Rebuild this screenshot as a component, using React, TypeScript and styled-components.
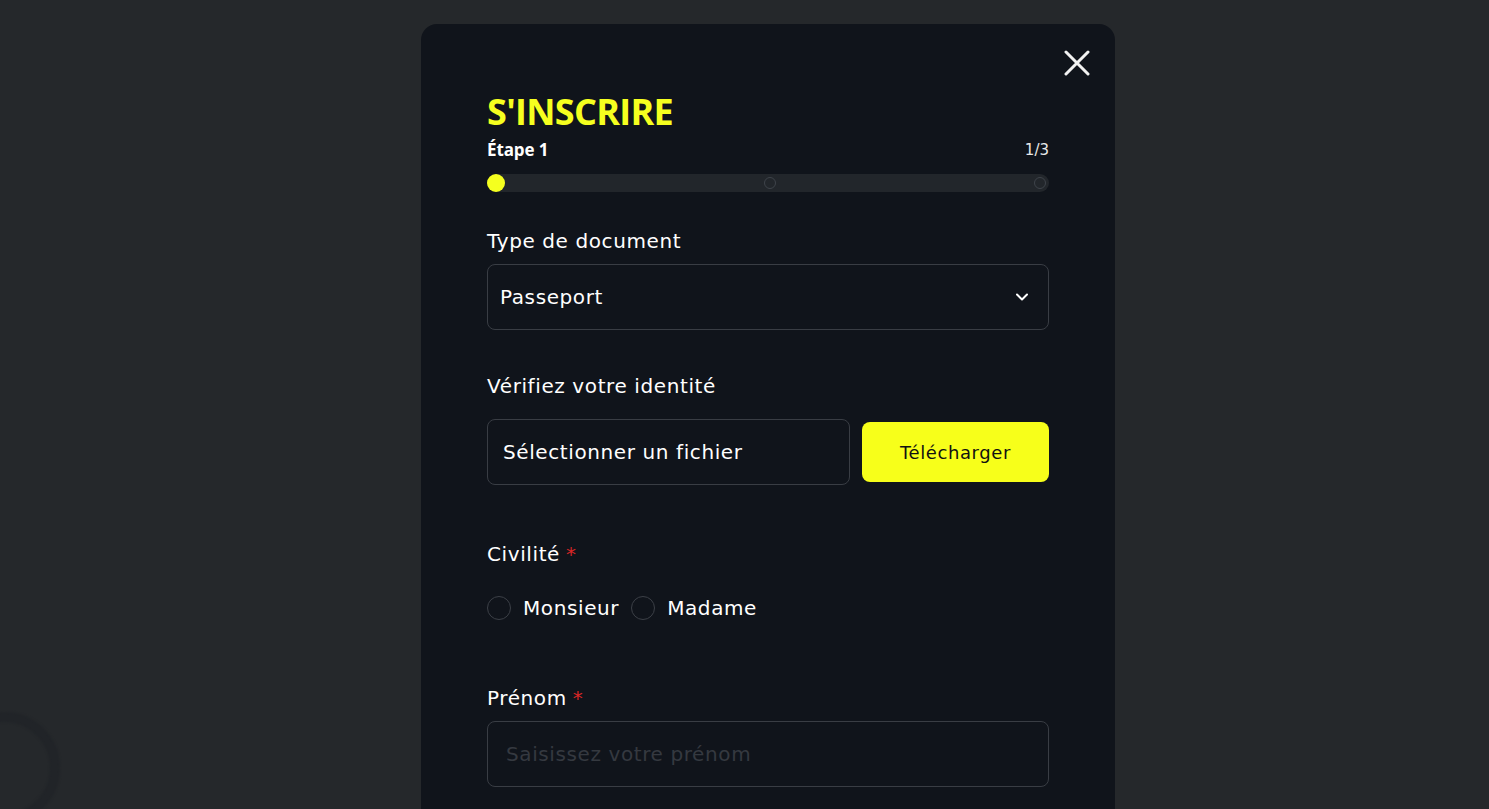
import React from 'react';
import styled, { createGlobalStyle } from 'styled-components';

const GlobalStyle = createGlobalStyle`
    html, body {
        margin: 0;
        padding: 0;
        height: 100%;
        overflow: hidden;
        background: #25282b;
        font-family: 'DejaVu Sans', 'Open Sans', sans-serif;
        color: #ffffff;
    }
`;

const Page = styled.div`
    min-height: 100vh;
    display: flex;
    justify-content: center;
    padding: 24px 0 0 47px;
    box-sizing: border-box;
`;

const Spinner = styled.div`
    position: fixed;
    left: -52px;
    top: 712px;
    width: 92px;
    height: 92px;
    border-radius: 50%;
    border: 10px solid #212428;
    filter: blur(1px);
`;

const Modal = styled.div`
    position: relative;
    width: 694px;
    min-height: 820px;
    box-sizing: border-box;
    padding: 68px 66px 40px;
    background: #10141b;
    border-radius: 16px;
`;

const CloseButton = styled.button`
    position: absolute;
    top: 23px;
    right: 22px;
    width: 32px;
    height: 32px;
    padding: 0;
    border: none;
    background: none;
    cursor: pointer;
    display: flex;
    align-items: center;
    justify-content: center;
`;

const Title = styled.h1`
    margin: 0;
    font-family: 'Open Sans', sans-serif;
    font-size: 36px;
    line-height: 40px;
    font-weight: 700;
    letter-spacing: -0.7px;
    color: #f5ff1f;
`;

const StepRow = styled.div`
    display: flex;
    justify-content: space-between;
    align-items: center;
    margin-top: 7px;
    font-size: 15px;
    line-height: 22px;
`;

const StepName = styled.span`
    font-family: 'Open Sans', sans-serif;
    font-weight: 700;
    font-size: 17px;
    letter-spacing: -0.1px;
`;

const StepCount = styled.span`
    font-weight: 400;
    color: #e8e8e8;
`;

const Track = styled.div`
    margin-top: 13px;
    height: 18px;
    border-radius: 9px;
    background: #22262b;
    display: flex;
    justify-content: space-between;
    align-items: center;
    padding: 0 3px 0 0;
`;

const Dot = styled.span<{ active?: boolean }>`
    box-sizing: border-box;
    width: ${p => (p.active ? '18px' : '12px')};
    height: ${p => (p.active ? '18px' : '12px')};
    border-radius: 50%;
    background: ${p => (p.active ? '#f5ff1f' : 'transparent')};
    border: ${p => (p.active ? 'none' : '1.5px solid #3e434a')};
`;

const Field = styled.div<{ gap?: number }>`
    margin-top: ${p => p.gap ?? 40}px;
`;

const Label = styled.div`
    font-size: 20px;
    line-height: 26px;
    font-weight: 400;
    letter-spacing: 0.6px;
    margin-bottom: 10px;
`;

const Required = styled.span`
    color: #d92626;
    margin-left: 6px;
`;

const Box = styled.div`
    box-sizing: border-box;
    height: 66px;
    border: 1px solid #393d44;
    border-radius: 8px;
    display: flex;
    align-items: center;
    justify-content: space-between;
    padding: 0 18px 0 12px;
    font-size: 20px;
    letter-spacing: 0.6px;
`;

const FileRow = styled.div`
    display: flex;
    align-items: center;
    gap: 12px;
    margin-top: 20px;
`;

const FileBox = styled(Box)`
    flex: 1;
    padding-left: 15px;
`;

const UploadButton = styled.button`
    width: 187px;
    height: 60px;
    border: none;
    border-radius: 8px;
    background: #f7ff1a;
    color: #111;
    font-family: inherit;
    font-size: 18px;
    letter-spacing: 0.6px;
    cursor: pointer;
`;

const RadioRow = styled.div`
    display: flex;
    align-items: center;
    gap: 12px;
    margin-top: 29px;
`;

const RadioOption = styled.label`
    display: flex;
    align-items: center;
    gap: 12px;
    font-size: 20px;
    letter-spacing: 0.6px;
`;

const RadioCircle = styled.span`
    box-sizing: border-box;
    width: 24px;
    height: 24px;
    border-radius: 50%;
    border: 1px solid #3c4047;
`;

const TextInput = styled.input`
    box-sizing: border-box;
    width: 100%;
    height: 66px;
    border: 1px solid #393d44;
    border-radius: 8px;
    background: transparent;
    padding: 0 18px;
    font-family: inherit;
    font-size: 20px;
    letter-spacing: 0.6px;
    color: #fff;
    outline: none;
    &::placeholder {
        color: #353940;
    }
`;

const App = () => {
    return (
        <>
            <GlobalStyle />
            <Spinner />
            <Page>
                <Modal>
                    <CloseButton aria-label="Fermer">
                        <svg width="26" height="26" viewBox="0 0 26 26" fill="none">
                            <path d="M2 2L24 24M24 2L2 24" stroke="#f2f2f2" strokeWidth="3" strokeLinecap="round" />
                        </svg>
                    </CloseButton>

                    <Title>S'INSCRIRE</Title>
                    <StepRow>
                        <StepName>Étape 1</StepName>
                        <StepCount>1/3</StepCount>
                    </StepRow>
                    <Track>
                        <Dot active />
                        <Dot />
                        <Dot />
                    </Track>

                    <Field gap={36}>
                        <Label>Type de document</Label>
                        <Box>
                            <span>Passeport</span>
                            <svg width="16" height="16" viewBox="0 0 16 16" fill="none">
                                <path d="M3 5.5L8 10.5L13 5.5" stroke="#fff" strokeWidth="2" strokeLinecap="round" strokeLinejoin="round" />
                            </svg>
                        </Box>
                    </Field>

                    <Field gap={43}>
                        <Label>Vérifiez votre identité</Label>
                        <FileRow>
                            <FileBox>Sélectionner un fichier</FileBox>
                            <UploadButton>Télécharger</UploadButton>
                        </FileRow>
                    </Field>

                    <Field gap={56}>
                        <Label>
                            Civilité<Required>*</Required>
                        </Label>
                        <RadioRow>
                            <RadioOption>
                                <RadioCircle />
                                Monsieur
                            </RadioOption>
                            <RadioOption>
                                <RadioCircle />
                                Madame
                            </RadioOption>
                        </RadioRow>
                    </Field>

                    <Field gap={65}>
                        <Label>
                            Prénom<Required>*</Required>
                        </Label>
                        <TextInput placeholder="Saisissez votre prénom" />
                    </Field>
                </Modal>
            </Page>
        </>
    );
};

export default App;
